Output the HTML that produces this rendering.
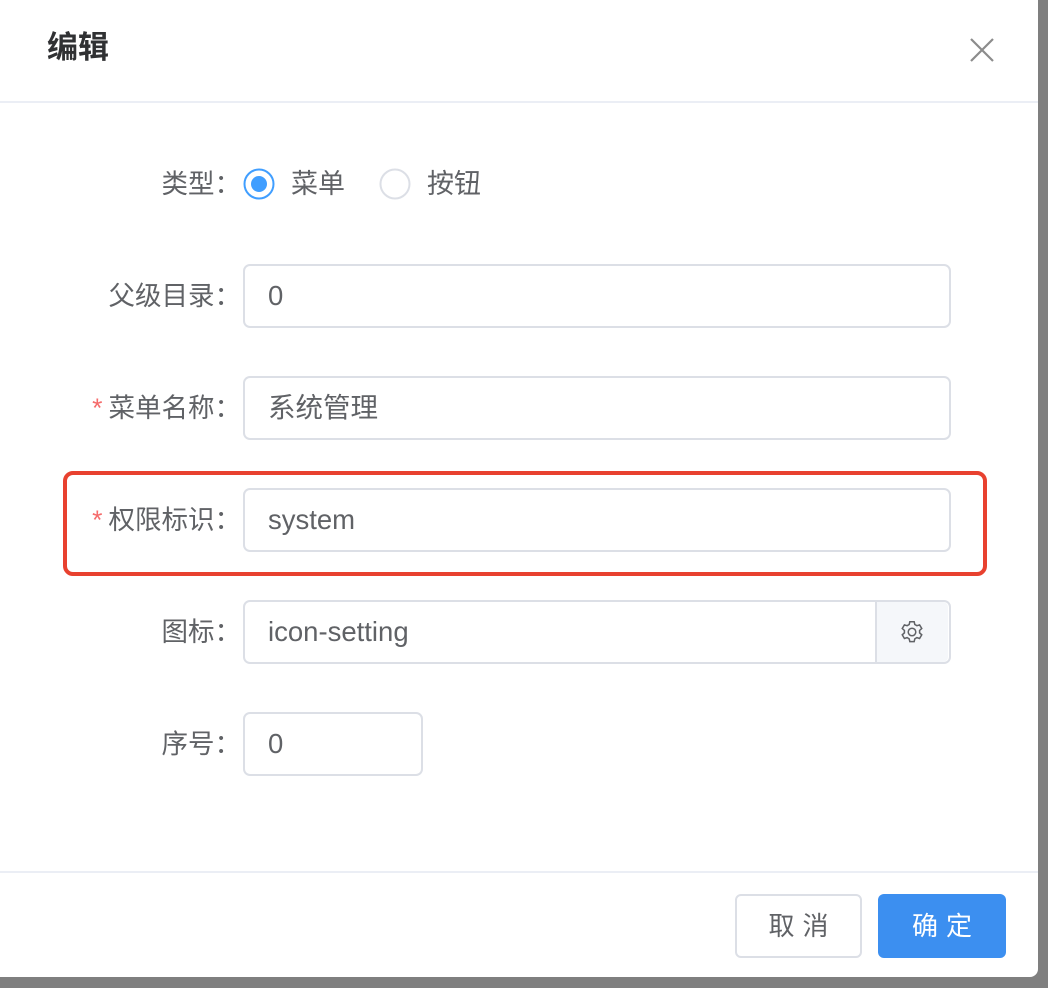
<!DOCTYPE html>
<html><head><meta charset="utf-8"><style>
*{box-sizing:border-box;margin:0;padding:0}
body{width:1048px;height:988px;background:#7f7f7f;position:relative;overflow:hidden;font-family:"Liberation Sans","Noto Sans CJK SC",sans-serif;}
.dlg{position:absolute;left:0;top:0;width:1038px;height:977px;background:#fff;border-radius:0 0 8px 0;}
.title{position:absolute;left:47px;top:29px;font-size:31px;font-weight:bold;color:#303133;line-height:38px}
.hdiv{position:absolute;left:0;top:101px;width:1038px;height:2px;background:#ebeef5}
.fdiv{position:absolute;left:0;top:871px;width:1038px;height:2px;background:#ebeef5}
.lbl{position:absolute;right:797px;font-size:26.5px;color:#606266;line-height:32px;white-space:nowrap}
.lbl .s{color:#f56c6c;margin-right:6px}
.inp{position:absolute;left:243px;height:64px;border:2px solid #dcdfe6;border-radius:7px;font-size:27.5px;color:#606266;padding-left:23px;line-height:60px}
.red{position:absolute;left:63px;top:471px;width:924px;height:105px;border:4px solid #e8412f;border-radius:10px}
.btn{position:absolute;top:894px;height:64px;border-radius:6px;font-size:26px;line-height:60px;text-align:center;letter-spacing:8px;text-indent:8px}
</style></head><body>
<div class="dlg">
<div class="title">编辑</div>
<svg style="position:absolute;left:970px;top:38px" width="24" height="24" viewBox="0 0 24 24"><path d="M1 1L23 23M23 1L1 23" stroke="#8c8c8c" stroke-width="2.2"/></svg>
<div class="hdiv"></div>

<div class="lbl" style="top:168px">类型：</div>
<svg style="position:absolute;left:243px;top:168px" width="32" height="32"><circle cx="16" cy="16" r="14.5" fill="#fff" stroke="#409eff" stroke-width="2"/><circle cx="16" cy="16" r="8" fill="#409eff"/></svg>
<div style="position:absolute;left:291px;top:168px;font-size:27px;color:#606266;line-height:32px">菜单</div>
<svg style="position:absolute;left:379px;top:168px" width="32" height="32"><circle cx="16" cy="16" r="14.5" fill="#fff" stroke="#dcdfe6" stroke-width="2"/></svg>
<div style="position:absolute;left:427px;top:168px;font-size:27px;color:#606266;line-height:32px">按钮</div>

<div class="lbl" style="top:280px">父级目录：</div>
<div class="inp" style="top:264px;width:708px">0</div>

<div class="lbl" style="top:392px"><span class="s">*</span>菜单名称：</div>
<div class="inp" style="top:376px;width:708px">系统管理</div>

<div class="red"></div>
<div class="lbl" style="top:504px"><span class="s">*</span>权限标识：</div>
<div class="inp" style="top:488px;width:708px">system</div>

<div class="lbl" style="top:616px">图标：</div>
<div class="inp" style="top:600px;width:708px">icon-setting</div>
<div style="position:absolute;left:875px;top:602px;width:73px;height:60px;background:#f5f7fa;border-left:2px solid #dcdfe6;border-radius:0 5px 5px 0"></div>
<svg style="position:absolute;left:899px;top:619px" width="26" height="26" viewBox="0 0 24 24" fill="none" stroke="#606266" stroke-width="1.4"><path d="M10 2.5h4l.6 2.6 1.9 1.1 2.5-.8 2 3.4-2 1.8v2.2l2 1.8-2 3.4-2.5-.8-1.9 1.1-.6 2.6h-4l-.6-2.6-1.9-1.1-2.5.8-2-3.4 2-1.8v-2.2l-2-1.8 2-3.4 2.5.8 1.9-1.1z"/><circle cx="12" cy="12" r="3.5"/></svg>

<div class="lbl" style="top:728px">序号：</div>
<div class="inp" style="top:712px;width:180px">0</div>

<div class="fdiv"></div>
<div class="btn" style="left:735px;width:127px;border:2px solid #dcdfe6;color:#606266;background:#fff">取消</div>
<div class="btn" style="left:878px;width:128px;background:#3c8ff0;color:#fff;line-height:64px">确定</div>
</div>
</body></html>
